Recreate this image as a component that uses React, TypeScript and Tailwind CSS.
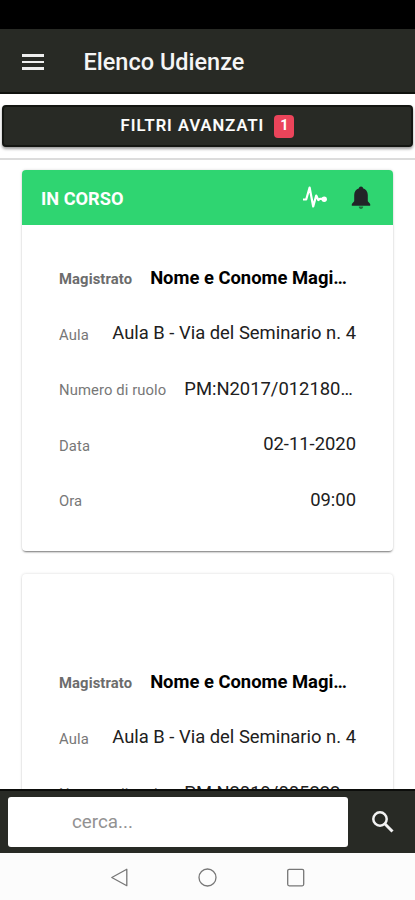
import React from "react";

type Row = { label: string; value: string; bold?: boolean; clipped?: boolean };

function DataRow({ label, value, bold, clipped }: Row) {
  return (
    <div className="flex h-[55.5px] items-center justify-between whitespace-nowrap">
      <span
        className={
          bold
            ? "relative top-[1.5px] text-[14.8px] font-bold tracking-[0.1px] text-[#6c6c6c]"
            : "relative top-[1.5px] text-[14.8px] tracking-[0.1px] text-[#777777]"
        }
      >
        {label}
      </span>
      <span
        className={
          (bold ? "font-bold text-black " : "text-[#202020] ") +
          (clipped ? "ml-[18px] flex-1 text-left text-[18.4px]" : "text-right text-[18.4px]")
        }
      >
        {value}
      </span>
    </div>
  );
}

function HearingCard({ rows, active }: { rows: Row[]; active?: boolean }) {
  return (
    <section className="mx-[22px] h-[381px] shrink-0 overflow-hidden rounded-[4px] bg-white shadow-[0_2px_2px_-1px_rgba(0,0,0,0.5),0_0_3px_rgba(0,0,0,0.16)]">
      {active ? (
        <div className="flex h-[55px] items-center bg-[#2fd571] pr-[22px] pl-[19px] text-white">
          <h2 className="flex-1 pt-[2px] text-[18.2px] font-bold">IN CORSO</h2>
          <svg className="mr-[23px] h-[24px] w-[26px]" viewBox="0 0 26 24" fill="none" stroke="currentColor" strokeWidth="2.2" strokeLinejoin="round">
            <path d="M1 13.500H4.200L7.600 1.500L11.200 20.500L14.200 9.500L16.300 14L18 12.800H22" />
            <circle cx="22.200" cy="13.300" r="2.700" fill="currentColor" stroke="none" />
          </svg>
          <svg className="h-[24px] w-[20px]" viewBox="0 0 20 24" fill="#222428">
            <path d="M10 .5c-1.200 0-2 .8-2 1.800-3 .8-4.800 3.400-4.800 6.800v6.200L.8 18v1.800h18.400V18l-2.400-2.700V9.100c0-3.400-1.800-6-4.800-6.800 0-1-.8-1.800-2-1.800Z" />
            <path d="M7.800 20.500h4.400c0 1.400-.9 2.400-2.200 2.400s-2.200-1-2.200-2.400Z" fill="#20733f" />
          </svg>
        </div>
      ) : (
        <div className="h-[55px]" />
      )}
      <div className="pt-[25px] pr-[37px] pl-[37px]">
        {rows.map((r) => (
          <DataRow key={r.label} {...r} />
        ))}
      </div>
    </section>
  );
}

const hearing = (roll: string): Row[] => [
  { label: "Magistrato", value: "Nome e Conome Magi…", bold: true, clipped: true },
  { label: "Aula", value: "Aula B - Via del Seminario n. 4" },
  { label: "Numero di ruolo", value: roll, clipped: true },
  { label: "Data", value: "02-11-2020" },
  { label: "Ora", value: "09:00" },
];

export default function App() {
  return (
    <div className="flex h-[900px] w-[415px] flex-col overflow-hidden bg-white font-[Roboto,sans-serif]">
      <div className="h-[29px] shrink-0 bg-black" />
      <header className="flex h-[65px] shrink-0 items-center border-b-2 border-[#10120e] bg-[#282a25] pl-[22px] text-[#f5f5f5]">
        <div className="mt-[3px] flex w-[22px] flex-col gap-[4px]">
          <span className="h-[2.500px] bg-[#eeeeee]" />
          <span className="h-[2.500px] bg-[#eeeeee]" />
          <span className="h-[2.500px] bg-[#eeeeee]" />
        </div>
        <h1 className="mt-[5px] ml-[39.500px] text-[23.500px] font-medium whitespace-nowrap">Elenco Udienze</h1>
      </header>

      <div className="h-[66px] shrink-0 border-b-2 border-[#dcdcdc] px-[2px] pt-[11px]">
        <button className="flex h-[42px] w-full items-center justify-center rounded-[4px] border-2 border-[#141612] bg-[#282a25] text-white shadow-[0_2px_3px_rgba(0,0,0,0.4)]">
          <span className="text-[16.500px] font-medium tracking-[1.080px] whitespace-nowrap [-webkit-text-stroke:0.2px_white]">FILTRI AVANZATI</span>
          <span className="ml-[10px] flex h-[23px] w-[20px] items-center justify-center rounded-[4px] bg-[#eb445a] text-[14.500px] font-bold">1</span>
        </button>
      </div>

      <main className="flex min-h-0 flex-1 flex-col gap-[23px] overflow-hidden pt-[10px]">
        <HearingCard active rows={hearing("PM:N2017/012180…")} />
        <HearingCard rows={hearing("PM:N2019/005222")} />
      </main>

      <footer className="flex h-[64px] shrink-0 items-center border-t-2 border-[#0c0d0b] bg-[#282a25] pl-[8px]">
        <div className="flex h-[50px] w-[340px] items-center rounded-[3px] bg-white pl-[64px] text-[18.800px] text-[#929292]">cerca...</div>
        <svg className="ml-[24px] h-[22px] w-[22px]" viewBox="0 0 22 22" fill="none" stroke="#f2f2f2">
          <circle cx="8" cy="8" r="6.700" strokeWidth="2.500" />
          <path d="M12.800 12.800L20.500 20.500" strokeWidth="3" />
        </svg>
      </footer>

      <nav className="flex h-[47px] shrink-0 items-center bg-[#fcfcfc] pl-[110px]">
        <svg className="h-[20px] w-[196px]" viewBox="0 0 196 20" fill="none" stroke="#777777" strokeWidth="1.300" strokeLinejoin="round">
          <path d="M1.800 10.500L16.800 2.300V18.700Z" />
          <circle cx="97.500" cy="10.500" r="8.500" />
          <rect x="177.700" y="2.300" width="16" height="16.500" rx="1.500" />
        </svg>
      </nav>
    </div>
  );
}
